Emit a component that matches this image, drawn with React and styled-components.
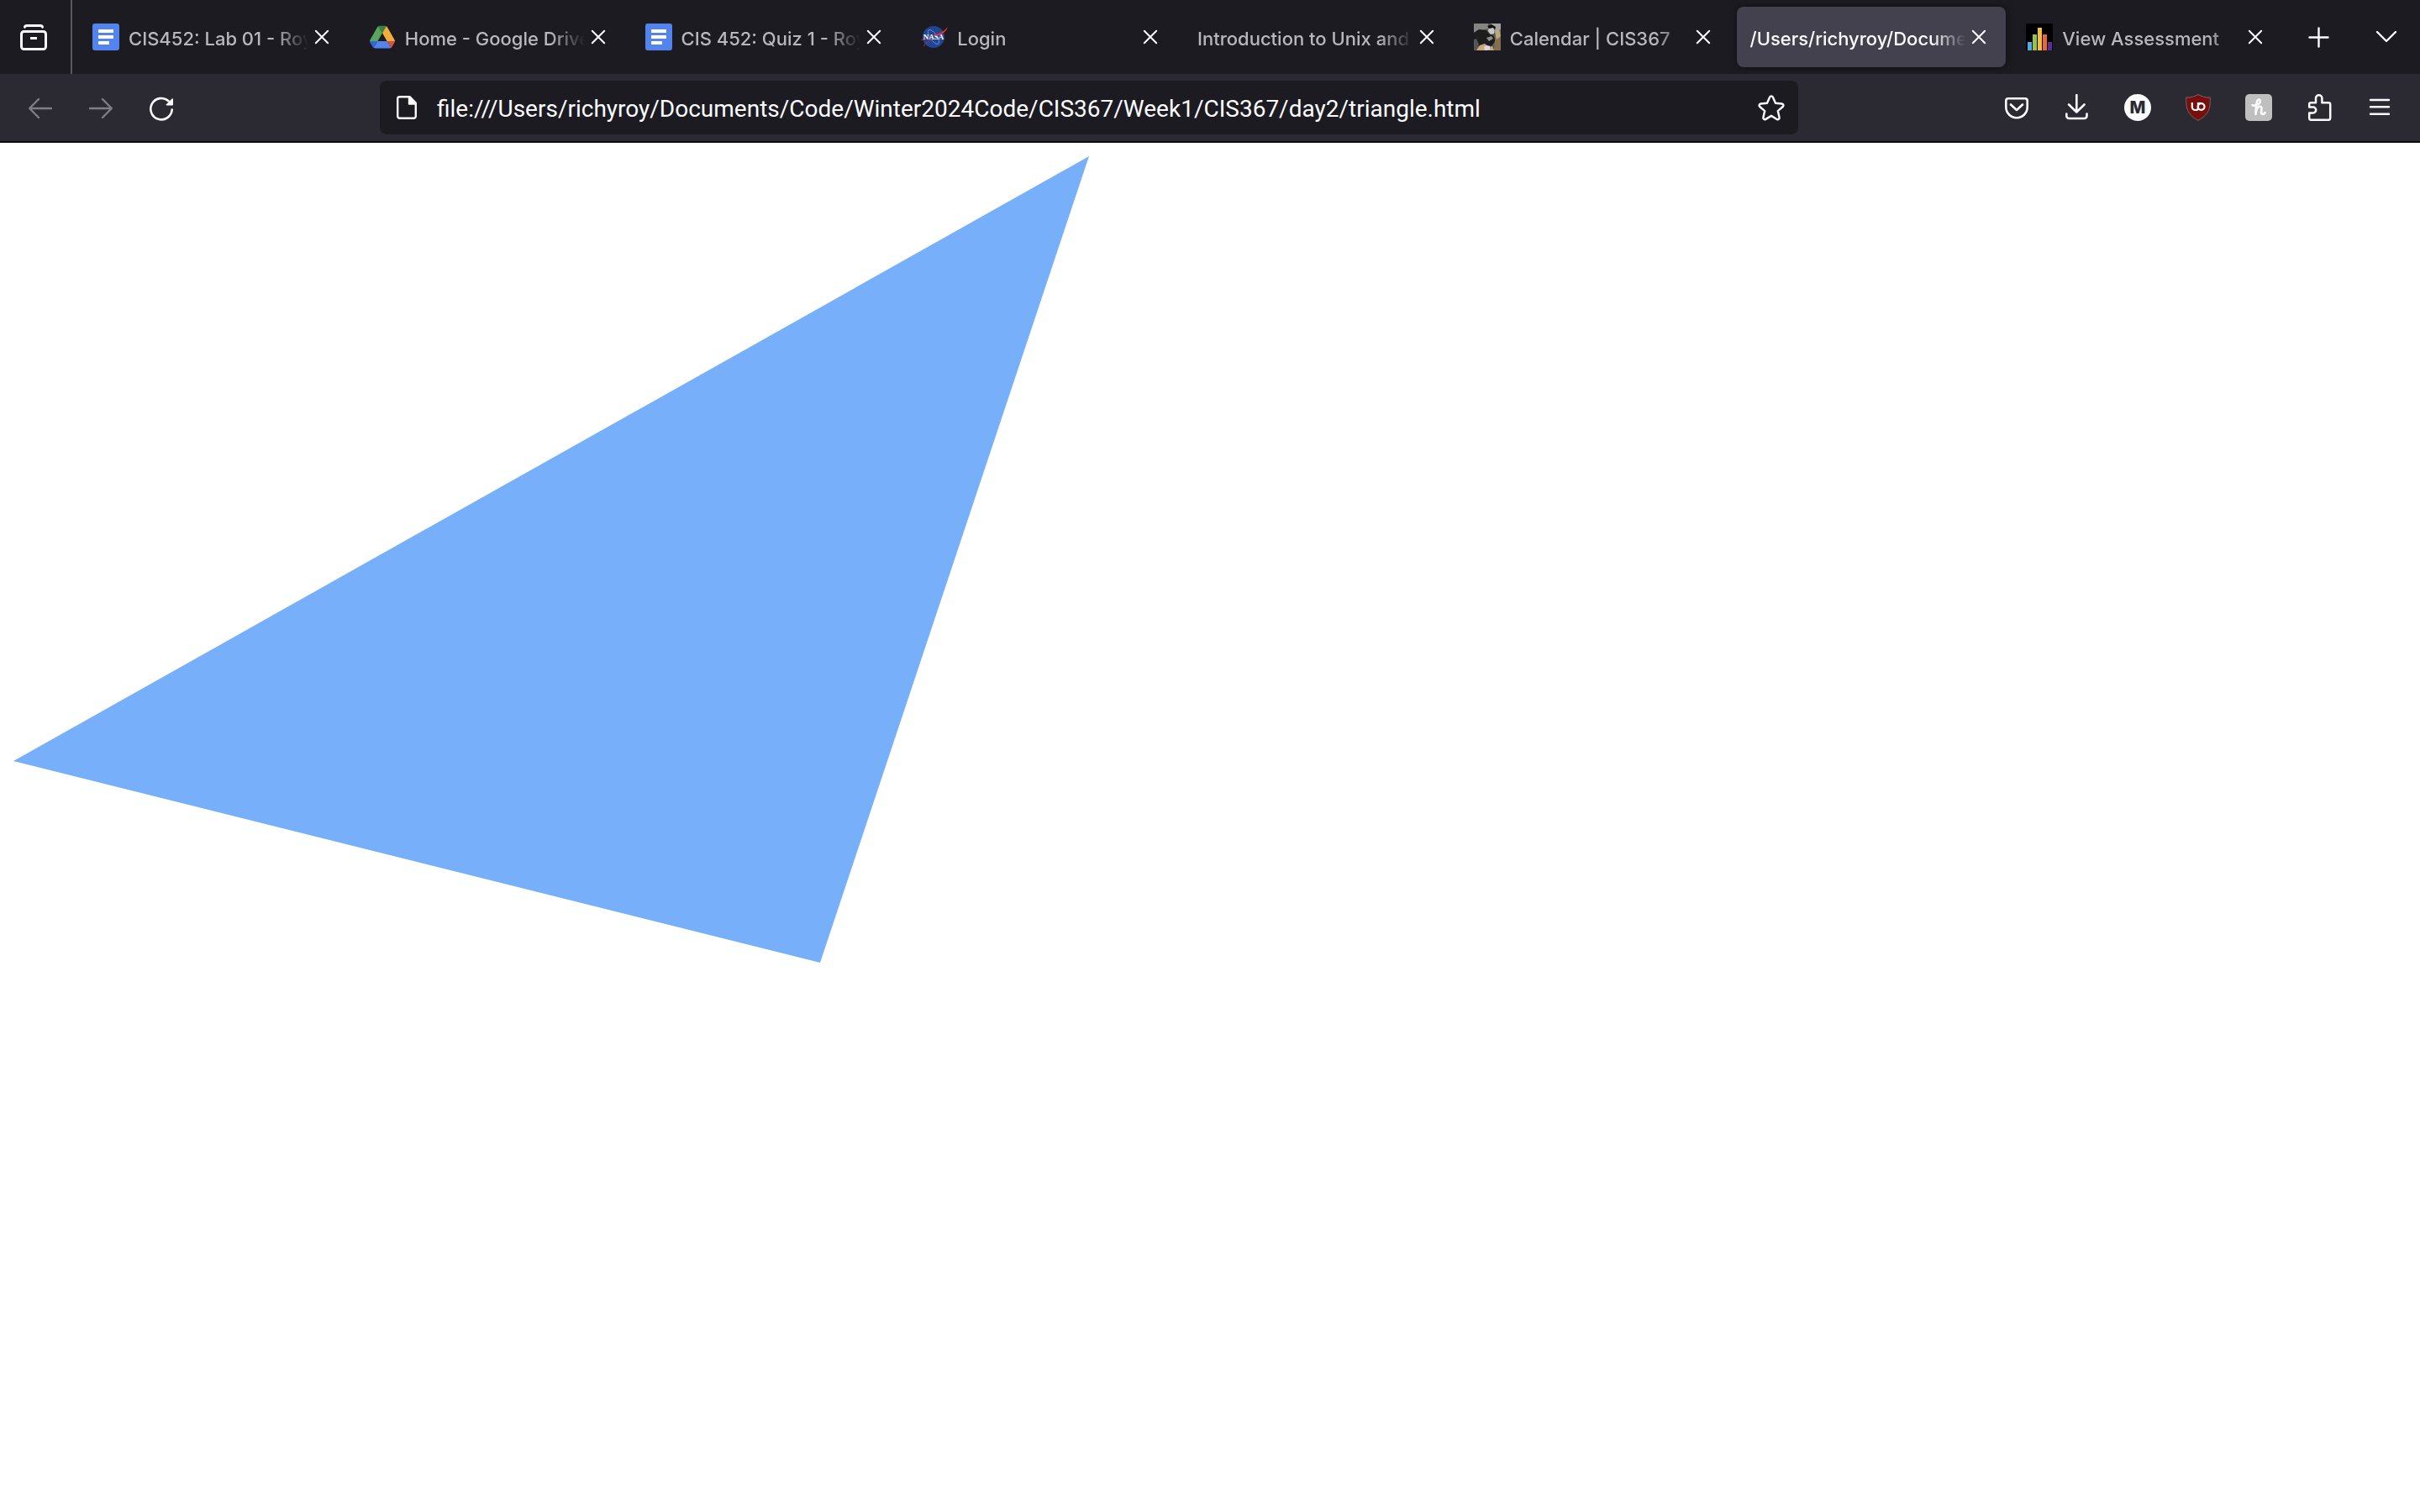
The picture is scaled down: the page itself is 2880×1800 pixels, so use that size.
import React, { useState } from "react";
import styled, { createGlobalStyle } from "styled-components";

const GlobalStyle = createGlobalStyle`
  * { box-sizing: border-box; }
  html, body, #root { height: 100%; }
  body {
    margin: 0;
    background: #ffffff;
    font-family: Inter, "Noto Sans", sans-serif;
  }
  button, input { font: inherit; color: inherit; }
`;

const Window = styled.div`
  display: flex;
  flex-direction: column;
  min-height: 100%;
`;

const TabBar = styled.header`
  display: flex;
  height: 88px;
  background: #1c1b22;
  color: #fbfbfe;
`;

const IconButton = styled.button`
  display: flex;
  align-items: center;
  justify-content: center;
  flex: none;
  width: ${(p) => p.$width || 72}px;
  height: ${(p) => p.$height || 64}px;
  padding: 0;
  border: 0;
  border-radius: 8px;
  background: none;
  color: #fbfbfe;

  &:disabled { opacity: 0.4; }
`;

const Separator = styled.div`
  width: 2px;
  margin: 0 4px;
  background: #5a5960;
`;

const TabList = styled.nav`
  display: flex;
  flex: 1;
  min-width: 0;
`;

const Tab = styled.div`
  display: flex;
  align-items: center;
  flex: 1 1 0;
  min-width: 0;
  height: 72px;
  margin: 8px 4px;
  padding: 0 16px;
  border-radius: 8px;
  color: ${(p) => (p.$active ? "#fbfbfe" : "#b8b8bc")};
  background: ${(p) => (p.$active ? "#42414d" : "transparent")};
  box-shadow: ${(p) => (p.$active ? "0 0 8px rgba(0, 0, 0, 0.5)" : "none")};
`;

const TabButton = styled.button`
  display: flex;
  align-items: center;
  flex: 1;
  gap: 11px;
  min-width: 0;
  height: 100%;
  padding: 0;
  border: 0;
  background: none;
  text-align: left;
`;

const TabLabel = styled.span`
  flex: 1;
  min-width: 0;
  padding-top: 4px;
  overflow: hidden;
  white-space: nowrap;
  font-size: 22px;
  line-height: 32px;
  font-weight: 450;
  mask-image: linear-gradient(to left, transparent, black 40px);
`;

const Toolbar = styled.div`
  display: flex;
  align-items: center;
  height: 82px;
  padding: 0 12px;
  background: #2b2a33;
  border-bottom: 2px solid #0c0c0d;
  color: #fbfbfe;
`;

const Spring = styled.div`
  flex: 0 1 224px;
`;

const AddressBar = styled.form`
  display: flex;
  align-items: center;
  flex: 1;
  min-width: 0;
  height: 64px;
  border-radius: 8px;
  background: #1c1b22;
`;

const AddressInput = styled.input`
  flex: 1;
  min-width: 0;
  height: 100%;
  padding: 2px 4px 0;
  border: 0;
  outline: 0;
  background: none;
  font-family: Roboto, Inter, sans-serif;
  font-size: 28px;
  line-height: 36px;
`;

const Page = styled.main`
  flex: 1;
  padding: 16px;
  background: #ffffff;
`;

const Drawing = styled.svg`
  display: block;
  width: 1280px;
  height: 960px;
`;

const Glyph = styled.svg`
  display: block;
  flex: none;
  width: 32px;
  height: 32px;
`;

function Line({ children, weight = 2.4 }) {
  return (
    <Glyph viewBox="0 0 32 32" fill="none" stroke="currentColor" strokeWidth={weight} strokeLinecap="round" strokeLinejoin="round" aria-hidden="true">
      {children}
    </Glyph>
  );
}

const RecentIcon = () => (
  <Line weight={3}>
    <path d="M5.5 4.2C5.8 3 6.6 2.5 7.8 2.5h16.4c1.2 0 2 .5 2.3 1.7" />
    <rect x="1.5" y="9.5" width="29" height="21" rx="3" />
    <path d="M12 17.5h8" strokeLinecap="butt" />
  </Line>
);
const CloseIcon = () => <Line weight={2}><path d="M8.8 8.8l14.4 14.4M23.2 8.8L8.8 23.2" /></Line>;
const PlusIcon = () => <Line><path d="M15.5 5.5v22M4.5 16.5h22" /></Line>;
const ChevronIcon = () => <Line><path d="M5 10l11 11 11-11" /></Line>;
const BackIcon = () => <Line><path d="M3.5 17h25.5M14 6L3.2 17 14 28" /></Line>;
const ForwardIcon = () => <Line><path d="M28.5 17H3M18 6l10.8 11L18 28" /></Line>;
const ReloadIcon = () => (
  <Line weight={2.6}>
    <path d="M28.7 18.5A12.7 12.7 0 1 1 24.5 8.2" />
    <path d="M29.2 6v6.8h-6.8z" fill="currentColor" strokeWidth="1.6" />
  </Line>
);
const PageIcon = () => (
  <Line weight={2.4}>
    <path d="M7.5 3.2h12l7.3 7.3v15.8a2.5 2.5 0 0 1-2.5 2.5H7.7a2.5 2.5 0 0 1-2.5-2.5V5.5a2.3 2.3 0 0 1 2.3-2.3z" />
    <path d="M19 4v7.5h7z" fill="currentColor" />
  </Line>
);
const StarIcon = () => (
  <Line weight={2.4}>
    <path d="M14.2 3.5a2 2 0 0 1 3.6 0l3.2 7.3 7.7.7a2 2 0 0 1 1 3.5l-5.9 5.1 1.8 7.6a2 2 0 0 1-3 2.2L16 25.9l-6.6 4a2 2 0 0 1-3-2.2l1.8-7.6L2.3 15a2 2 0 0 1 1-3.5l7.7-.7z" />
  </Line>
);
const PocketIcon = () => (
  <Line weight={2.6}>
    <path d="M6 5.3h20a2.7 2.7 0 0 1 2.7 2.7v7.5a12.7 12.7 0 0 1-25.4 0V8A2.7 2.7 0 0 1 6 5.3z" />
    <path d="M9 12.5l7 6.5 7-6.5" />
  </Line>
);
const DownloadIcon = () => (
  <Line weight={2.6}>
    <path d="M15.3 1v20.5M6.1 12.5l9.2 9 9.2-9M3.3 23.5v2.5a3 3 0 0 0 3 3h18.2a3 3 0 0 0 3-3v-2.5" />
  </Line>
);
const PuzzleIcon = () => (
  <Line weight={2.5}>
    <path d="M12 10.3V5a3.7 3.7 0 0 1 7.4 0v5.3h7.8a2 2 0 0 1 2 2v16.5a2 2 0 0 1-2 2H6.2a2 2 0 0 1-2-2V22.4h4.6a3.4 3.4 0 0 0 0-6.8H4.2v-3.3a2 2 0 0 1 2-2z" />
  </Line>
);
const MenuIcon = () => <Line weight={2.4}><path d="M5 7h22M5 15.3h22M5 23.7h22" /></Line>;

const AccountIcon = () => (
  <Glyph viewBox="0 0 32 32" aria-hidden="true">
    <circle cx="16" cy="16" r="16" fill="#fbfbfe" />
    <text x="16" y="23" textAnchor="middle" fontFamily="Inter, sans-serif" fontSize="20" fontWeight="800" fill="#2b2a33">M</text>
  </Glyph>
);
const ShieldIcon = () => (
  <Glyph viewBox="0 0 32 32" aria-hidden="true">
    <path d="M16 .5c4 2.5 9 3.7 14.3 3.7 0 12-.2 19-14.3 27.3C1.9 23.2 1.7 16.2 1.7 4.2 7 4.2 12 3 16 .5z" fill="#780f0c" stroke="#78656a" strokeWidth="1" />
    <g fill="none" stroke="#ffffff" strokeWidth="2.2">
      <path d="M8.8 10v5.2a3.8 3.8 0 0 0 3.8 3.8h.6a2.8 2.8 0 0 0 2.8-2.8V11" />
      <path d="M14.9 11h4.1" />
      <circle cx="19.6" cy="15" r="3.9" />
    </g>
  </Glyph>
);
const HoneyIcon = () => (
  <Glyph viewBox="0 0 32 32" aria-hidden="true">
    <rect width="32" height="32" rx="5" fill="#bfbfbf" />
    <path d="M8.5 13.2c4 1.5 9.5-1.2 9.3-5.2-.2-2.3-3-1.700-3.700.5-1.200 4-1.500 10-1.600 15.500.3-5 2.300-9.500 5.200-9.300 4.200.4-.8 8.800 2.800 9.200 1.500.1 2.600-.7 3.200-2" fill="none" stroke="#fafafa" strokeWidth="2.6" strokeLinecap="round" strokeLinejoin="round" />
  </Glyph>
);

const DocsIcon = () => (
  <Glyph viewBox="0 0 32 32" aria-hidden="true">
    <rect width="32" height="32" rx="3" fill="#5383ec" />
    <path d="M7 7h18v4H7zM7 14h18v4H7zM7 21h13v4H7z" fill="#ffffff" />
  </Glyph>
);
const DriveIcon = () => (
  <Glyph viewBox="-3 -8 93.3 93.3" aria-hidden="true">
    <path d="m6.6 66.85 3.85 6.65c.8 1.4 1.95 2.5 3.3 3.3l13.75-23.8h-27.5c0 1.55.4 3.1 1.2 4.5z" fill="#3467d6" />
    <path d="m43.65 25-13.75-23.8c-1.35.8-2.5 1.9-3.3 3.3l-25.4 44a9.06 9.06 0 0 0 -1.2 4.5h27.5z" fill="#58a65c" />
    <path d="m73.55 76.8c1.35-.8 2.5-1.9 3.3-3.3l1.6-2.75 7.65-13.25c.8-1.4 1.2-2.95 1.2-4.5h-27.5l5.85 11.5z" fill="#d85140" />
    <path d="m43.65 25 13.75-23.8c-1.35-.8-2.9-1.2-4.5-1.2h-18.5c-1.6 0-3.15.45-4.5 1.2z" fill="#3a8143" />
    <path d="m59.8 53h-32.3l-13.75 23.8c1.35.8 2.9 1.2 4.5 1.2h50.8c1.6 0 3.15-.45 4.5-1.2z" fill="#5383ec" />
    <path d="m73.4 26.5-12.7-22c-.8-1.4-1.95-2.5-3.3-3.3l-13.75 23.8 16.15 28h27.45c0-1.55-.4-3.1-1.2-4.5z" fill="#f1ae3d" />
  </Glyph>
);
const NasaIcon = () => (
  <Glyph viewBox="0 0 32 32" aria-hidden="true">
    <circle cx="15" cy="16" r="13" fill="#1f4596" />
    <ellipse cx="15" cy="16" rx="4" ry="10" transform="rotate(-35 15 16)" fill="none" stroke="#7f96c8" strokeWidth=".8" />
    <path d="M.5 19.5c3-.5 6-1.2 9-2.5M3 27c3-4 7-7 12-9" fill="none" stroke="#c0302c" strokeWidth="1" />
    <text x="15" y="19" textAnchor="middle" fontFamily="Liberation Serif, serif" fontSize="9" fontWeight="700" fill="#ffffff">NASA</text>
    <path d="M13 14c7-1 14-4 19-10-2 6-7 9-12 10.500z" fill="#e8352c" />
  </Glyph>
);
const PhotoIcon = () => (
  <Glyph viewBox="0 0 32 32" aria-hidden="true">
    <rect width="32" height="32" fill="#5b5b5a" />
    <path d="M0 0h17v6L8 8 0 11z" fill="#858584" />
    <path d="M20 0h12v7l-6 4z" fill="#a3a3a2" />
    <path d="M0 11l6-4 9 1 3 4 5 2 3 6-5 7-9-2-8 2-4-5z" fill="#1d1d1e" />
    <path d="M0 19l3-1 3 7-3 7H0z" fill="#555555" />
    <path d="M18 4l4-2 3 3-1 7-4 1-3-4z" fill="#c9c8c6" />
    <path d="M16 3l5-2 5 3-1 4-2-3-5 1z" fill="#111111" />
    <path d="M15 17l6-2 2 3-5 3z" fill="#8d8d8c" />
    <path d="M26 9l6-2v25h-8l1-12z" fill="#84704e" />
    <path d="M25 9l5-2 2 8-5 4z" fill="#bba888" />
    <path d="M3 32l4-6 6-2 5 4 4-1 2 5z" fill="#c9a878" />
    <path d="M12 28l3-2 4 1v4l-6 1z" fill="#ded5ea" />
  </Glyph>
);
const BarsIcon = () => (
  <Glyph viewBox="0 0 32 32" aria-hidden="true">
    <rect width="32" height="32" fill="#000000" />
    <rect x="2" y="22" width="5" height="10" fill="#4eaae8" />
    <rect x="8" y="13" width="5" height="19" fill="#93c54c" />
    <rect x="14" y="5" width="5" height="27" fill="#f3bd3f" />
    <rect x="20" y="13" width="5" height="19" fill="#e3683c" />
    <rect x="26" y="22" width="5" height="10" fill="#5c2d91" />
  </Glyph>
);

const tabs = [
  { title: "CIS452: Lab 01 - Roy", Icon: DocsIcon },
  { title: "Home - Google Drive", Icon: DriveIcon },
  { title: "CIS 452: Quiz 1 - Roy", Icon: DocsIcon },
  { title: "Login", Icon: NasaIcon },
  { title: "Introduction to Unix and S" },
  { title: "Calendar | CIS367", Icon: PhotoIcon },
  { title: "/Users/richyroy/Documen", active: true },
  { title: "View Assessment", Icon: BarsIcon },
];

const actions = [
  ["Save to Pocket", PocketIcon],
  ["Downloads", DownloadIcon],
  ["Account", AccountIcon],
  ["uBlock Origin", ShieldIcon],
  ["Honey", HoneyIcon],
  ["Extensions", PuzzleIcon],
  ["Open application menu", MenuIcon],
];

export default function App() {
  const [address, setAddress] = useState(
    "file:///Users/richyroy/Documents/Code/Winter2024Code/CIS367/Week1/CIS367/day2/triangle.html"
  );
  return (
    <Window>
      <GlobalStyle />
      <TabBar>
        <IconButton $width={80} $height={88} aria-label="Recent browsing"><RecentIcon /></IconButton>
        <Separator />
        <TabList aria-label="Tabs">
          {tabs.map(({ title, Icon, active }) => (
            <Tab key={title} $active={active}>
              <TabButton aria-current={active ? "page" : undefined}>
                {Icon && <Icon />}
                <TabLabel>{title}</TabLabel>
              </TabButton>
              <IconButton $width={32} $height={48} aria-label={`Close ${title}`}><CloseIcon /></IconButton>
            </Tab>
          ))}
        </TabList>
        <IconButton $width={80} $height={88} aria-label="New tab"><PlusIcon /></IconButton>
        <IconButton $width={80} $height={88} aria-label="List all tabs"><ChevronIcon /></IconButton>
      </TabBar>
      <Toolbar>
        <IconButton disabled aria-label="Back"><BackIcon /></IconButton>
        <IconButton disabled aria-label="Forward"><ForwardIcon /></IconButton>
        <IconButton aria-label="Reload"><ReloadIcon /></IconButton>
        <Spring />
        <AddressBar onSubmit={(e) => e.preventDefault()}>
          <IconButton type="button" $width={64} aria-label="Site information"><PageIcon /></IconButton>
          <AddressInput aria-label="Address" value={address} onChange={(e) => setAddress(e.target.value)} />
          <IconButton type="button" $width={64} aria-label="Bookmark this page"><StarIcon /></IconButton>
        </AddressBar>
        <Spring />
        {actions.map(([label, Icon]) => (
          <IconButton key={label} aria-label={label}><Icon /></IconButton>
        ))}
      </Toolbar>
      <Page>
        <Drawing viewBox="0 0 1280 960" role="img" aria-label="Blue triangle">
          <polygon points="0,720 960,960 1280,0" fill="#78affa" />
        </Drawing>
      </Page>
    </Window>
  );
}
